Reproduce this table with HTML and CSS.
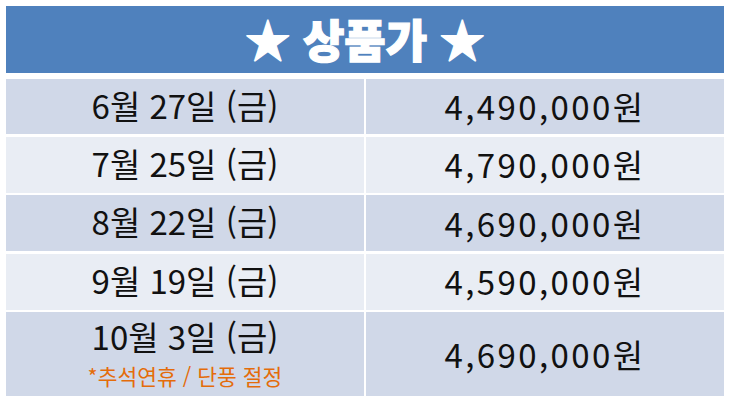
FILE: index.html
```html
<!DOCTYPE html>
<html lang="ko">
<head>
<meta charset="utf-8">
<link rel="stylesheet" href="styles.css">
</head>
<body>
<div class="table">
  <div class="head">★ 상품가 ★</div>
  <div class="rows">
    <div class="cell odd">6월 27일 (금)</div>
    <div class="cell odd price">4,490,000원</div>
    <div class="cell even">7월 25일 (금)</div>
    <div class="cell even price">4,790,000원</div>
    <div class="cell odd">8월 22일 (금)</div>
    <div class="cell odd price">4,690,000원</div>
    <div class="cell even">9월 19일 (금)</div>
    <div class="cell even price">4,590,000원</div>
    <div class="cell odd stack"><span class="main">10월 3일 (금)</span><span class="note">*추석연휴 / 단풍 절정</span></div>
    <div class="cell odd price">4,690,000원</div>
  </div>
</div>
</body>
</html>
```
FILE: styles.css
```css
html, body {
  margin: 0;
  padding: 0;
  background: #ffffff;
}
body {
  font-family: "Noto Sans CJK KR", "Noto Sans", sans-serif;
  color: #111111;
}
.table {
  width: 718px;
  margin: 6px 0 0 6px;
}
.head {
  height: 67px;
  background: #4f81bd;
  color: #ffffff;
  font-weight: 900;
  font-size: 45px;
  line-height: 1;
  display: flex;
  align-items: center;
  justify-content: center;
  padding-bottom: 2px;
  box-sizing: border-box;
  -webkit-text-stroke: 1.3px #ffffff;
}
.rows {
  margin-top: 6px;
  display: grid;
  grid-template-columns: 358px 358px;
  grid-template-rows: 55px 56px 56px 56px 84px;
  column-gap: 2px;
  row-gap: 2.5px;
}
.cell {
  display: flex;
  align-items: center;
  justify-content: center;
  font-size: 33px;
  line-height: 1;
  padding-bottom: 3px;
  box-sizing: border-box;
}
.price {
  letter-spacing: 2.4px;
  padding-bottom: 0;
}
.odd { background: #d0d8e8; }
.even { background: #e9edf4; }
.stack {
  flex-direction: column;
  gap: 0;
  padding-bottom: 6px;
}
.stack span {
  line-height: normal;
}
.note {
  font-size: 21.5px;
  color: #e46c0a;
}
```
